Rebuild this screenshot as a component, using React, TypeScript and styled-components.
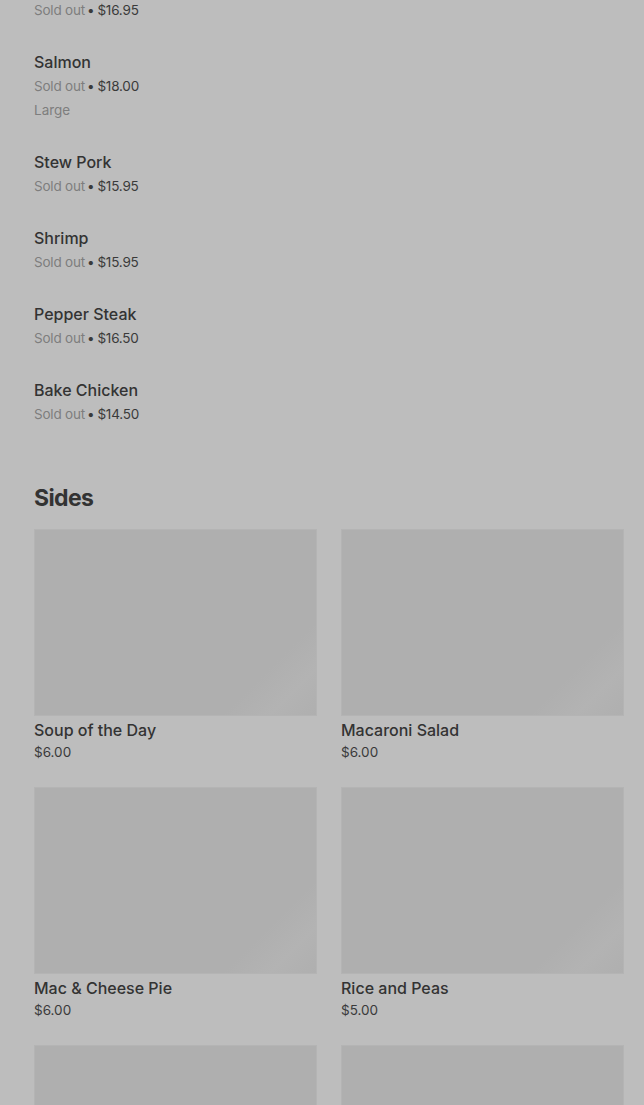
import React from "react"
import styled, { createGlobalStyle } from "styled-components"

const GlobalStyle = createGlobalStyle`
  html, body {
    margin: 0;
    padding: 0;
    background: #bdbdbd;
  }
  body {
    font-family: Inter, "Noto Sans", "Liberation Sans", sans-serif;
    -webkit-font-smoothing: antialiased;
  }
`

const Page = styled.div`
  padding: 0 20px 0 34px;
  margin-top: -2px;
  background: #bdbdbd;
  min-height: 1120px;
  overflow: hidden;
`

const List = styled.ul`
  list-style: none;
  margin: 0;
  padding: 0;
`

const Item = styled.li`
  padding: 13px 0 15px;
`

const ItemName = styled.div`
  font-size: 16px;
  line-height: 24px;
  font-weight: 500;
  color: #333333;
`

const Meta = styled.div`
  font-size: 13.5px;
  line-height: 24px;
  letter-spacing: -0.2px;
  color: #7e7e7e;
`

const Dot = styled.span`
  margin: 0 3px 0 2px;
  color: #3a3a3a;
`

const Price = styled.span`
  color: #3a3a3a;
`

const Note = styled.div`
  font-size: 13.5px;
  line-height: 24px;
  color: #7e7e7e;
`

const SectionTitle = styled.h2`
  margin: 41px 0 15px;
  font-size: 23px;
  line-height: 32px;
  font-weight: 700;
  letter-spacing: -0.6px;
  color: #333333;
`

const Grid = styled.div`
  display: grid;
  grid-template-columns: 1fr 1fr;
  column-gap: 24px;
  row-gap: 24px;
`

const Card = styled.div`
  display: flex;
  flex-direction: column;
`

const Thumb = styled.div`
  height: 187px;
  box-sizing: border-box;
  border: 1px solid #b4b4b4;
  background: linear-gradient(135deg, #afafaf 0%, #afafaf 80%, #b3b3b3 90%, #afafaf 100%);
`

const CardName = styled.div`
  margin-top: 2px;
  font-size: 16px;
  line-height: 24px;
  font-weight: 500;
  color: #333333;
`

const CardPrice = styled.div`
  font-size: 13.5px;
  line-height: 21px;
  color: #3a3a3a;
`

type Entry = { name?: string; price: string; note?: string }

const mains: Entry[] = [
  { price: "$16.95" },
  { name: "Salmon", price: "$18.00", note: "Large" },
  { name: "Stew Pork", price: "$15.95" },
  { name: "Shrimp", price: "$15.95" },
  { name: "Pepper Steak", price: "$16.50" },
  { name: "Bake Chicken", price: "$14.50" },
]

const sides = [
  { name: "Soup of the Day", price: "$6.00" },
  { name: "Macaroni Salad", price: "$6.00" },
  { name: "Mac & Cheese Pie", price: "$6.00" },
  { name: "Rice and Peas", price: "$5.00" },
  { name: "", price: "" },
  { name: "", price: "" },
]

export default function App() {
  return (
    <>
      <GlobalStyle />
      <Page>
        <List>
          {mains.map((m, i) => (
            <Item key={i} style={i === 0 ? { paddingTop: 0 } : undefined}>
              {m.name && <ItemName>{m.name}</ItemName>}
              <Meta>
                Sold out<Dot>•</Dot>
                <Price>{m.price}</Price>
              </Meta>
              {m.note && <Note>{m.note}</Note>}
            </Item>
          ))}
        </List>
        <SectionTitle>Sides</SectionTitle>
        <Grid>
          {sides.map((s, i) => (
            <Card key={i}>
              <Thumb />
              {s.name && <CardName>{s.name}</CardName>}
              {s.price && <CardPrice>{s.price}</CardPrice>}
            </Card>
          ))}
        </Grid>
      </Page>
    </>
  )
}
